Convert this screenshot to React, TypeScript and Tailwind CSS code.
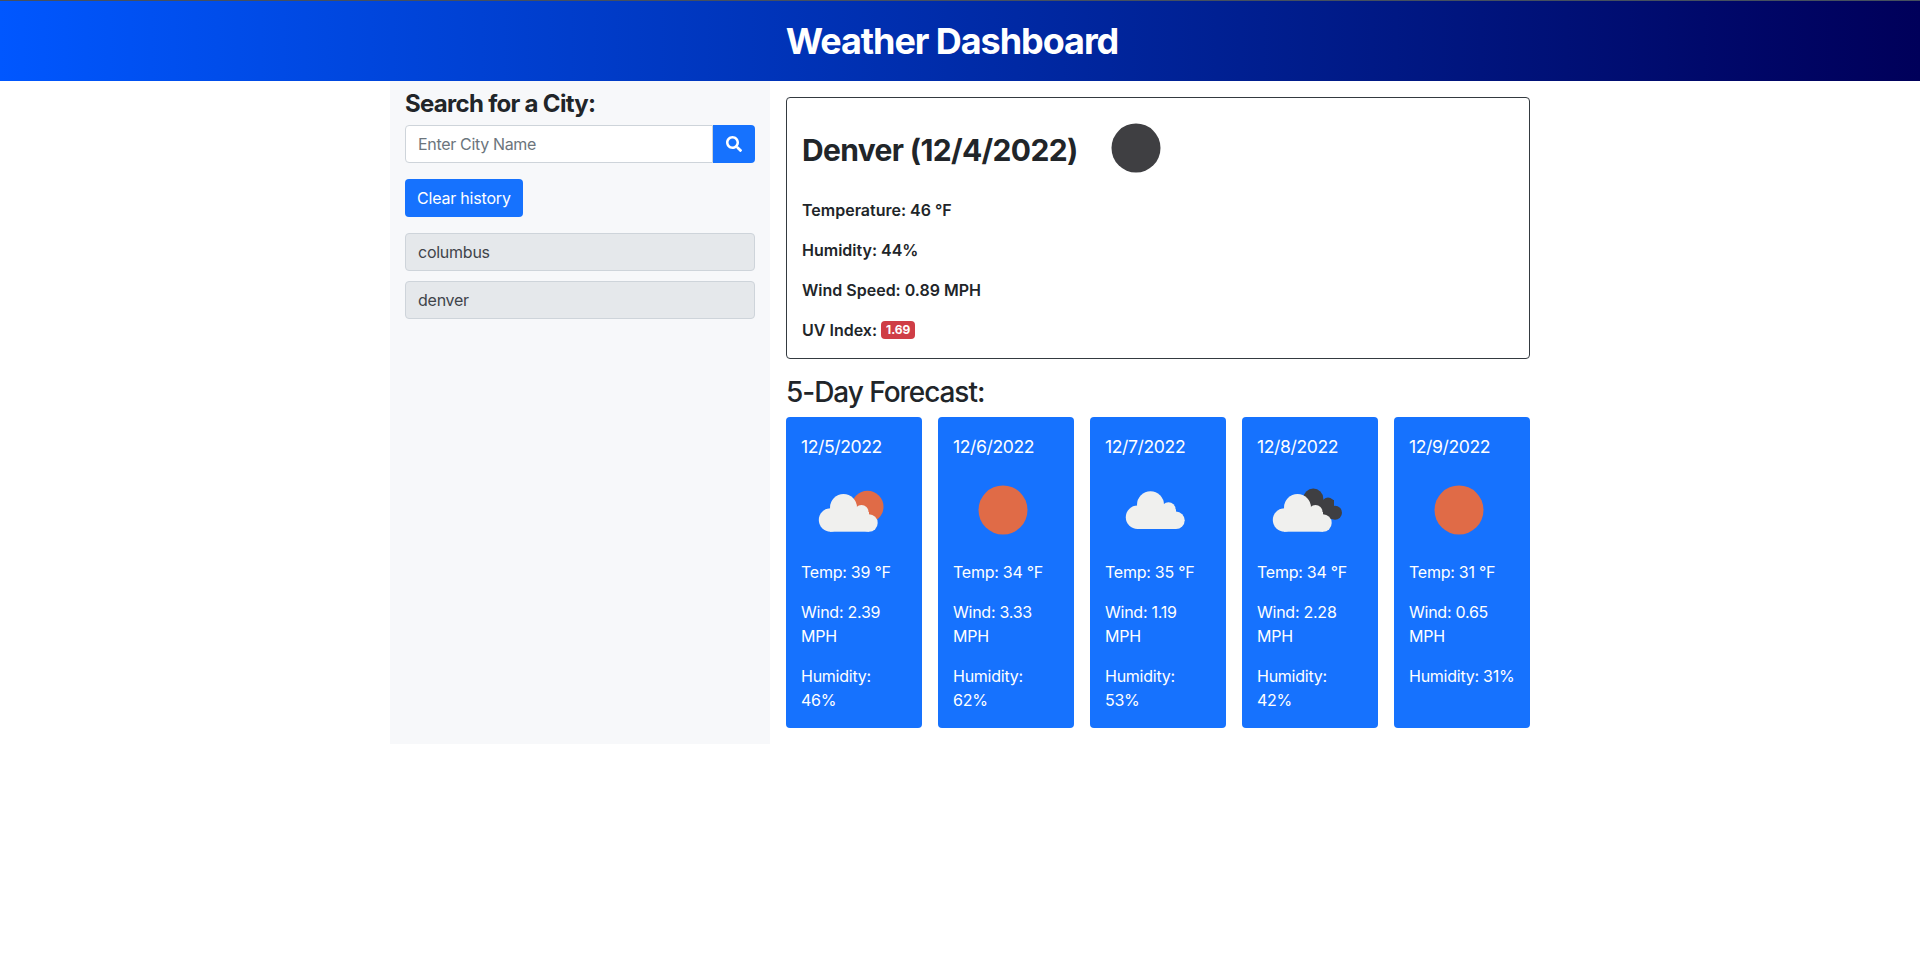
import { FaSearch } from 'react-icons/fa';

type IconKind = 'sun' | 'few' | 'cloud' | 'broken';

interface Day {
  date: string;
  icon: IconKind;
  temp: number;
  wind: string;
  humidity: number;
}

const HISTORY = ['columbus', 'denver'];

const FORECAST: Day[] = [
  { date: '12/5/2022', icon: 'few', temp: 39, wind: '2.39', humidity: 46 },
  { date: '12/6/2022', icon: 'sun', temp: 34, wind: '3.33', humidity: 62 },
  { date: '12/7/2022', icon: 'cloud', temp: 35, wind: '1.19', humidity: 53 },
  { date: '12/8/2022', icon: 'broken', temp: 34, wind: '2.28', humidity: 42 },
  { date: '12/9/2022', icon: 'sun', temp: 31, wind: '0.65', humidity: 31 },
];

// same puffy cloud in every icon, moved around per weather type
function Cloud({ x, y }: { x: number; y: number }) {
  return (
    <g transform={`translate(${x} ${y})`} fill="#f0f0ee">
      <circle cx="39.5" cy="47.5" r="13.5" />
      <circle cx="26.5" cy="60" r="11.7" />
      <circle cx="57.5" cy="52" r="7" />
      <circle cx="65" cy="63" r="8.7" />
      <rect x="26" y="52" width="39" height="19.7" />
    </g>
  );
}

function WeatherIcon({ kind, className }: { kind: IconKind | 'moon'; className?: string }) {
  return (
    <svg viewBox="0 0 100 100" className={className}>
      {kind === 'sun' && <circle cx="50" cy="50" r="24.5" fill="#e06b47" />}
      {kind === 'moon' && <circle cx="50" cy="50" r="24.5" fill="#3f3f42" />}
      {kind === 'few' && (
        <>
          <circle cx="66.5" cy="46.7" r="16" fill="#e06b47" />
          <Cloud x={3} y={0} />
        </>
      )}
      {kind === 'cloud' && <Cloud x={6} y={-2.7} />}
      {kind === 'broken' && (
        <>
          <g fill="#3f3f42">
            <circle cx="56.3" cy="38.5" r="10" />
            <circle cx="71" cy="43.5" r="6" />
            <circle cx="78" cy="52.7" r="7" />
            <rect x="53" y="40" width="24" height="19" />
          </g>
          <Cloud x={1} y={0} />
        </>
      )}
    </svg>
  );
}

function ForecastCard({ day }: { day: Day }) {
  return (
    <div className="w-[136px] rounded-[4px] bg-[#1672fe] px-[15px] pt-[17px] tracking-[-0.25px] text-white">
      <p className="text-[17.6px] leading-[26px] tracking-[-0.4px]">{day.date}</p>
      <WeatherIcon kind={day.icon} className="h-[100px] w-[100px]" />
      <p className="mb-4 leading-6">Temp: {day.temp} °F</p>
      <p className="mb-4 leading-6">Wind: {day.wind} MPH</p>
      <p className="mb-4 leading-6">Humidity: {day.humidity}%</p>
    </div>
  );
}

export default function App() {
  return (
    <div className="min-h-[970px] bg-white text-[#212529] font-['Inter',sans-serif]">
      <header className="flex h-[81px] items-center justify-center border-t border-[#46505f] bg-gradient-to-r from-[#0057ff] to-[#00005a] pr-4">
        <h1 className="text-[36px] font-bold tracking-[-1.06px] text-white">Weather Dashboard</h1>
      </header>

      <div className="mx-auto flex w-[1140px]">
        <aside className="w-[380px] bg-[#f7f8fa] px-[15px] pt-2">
          <h2 className="mb-[7px] text-[24px] leading-[29px] font-bold tracking-[-0.7px]">Search for a City:</h2>
          <div className="flex h-[38px]">
            <input
              placeholder="Enter City Name"
              className="h-full min-w-0 flex-1 rounded-l-[4px] border border-[#ced4da] bg-white px-3 tracking-[-0.33px] outline-none placeholder:text-[#6c757d]"
            />
            <button className="flex w-[42px] items-center justify-center rounded-r-[4px] bg-[#1672fe] text-white">
              <FaSearch size={16} />
            </button>
          </div>
          <button className="mt-4 h-[38px] rounded-[4px] bg-[#1672fe] px-3 tracking-[-0.2px] text-white">
            Clear history
          </button>
          <div className="mt-4 flex flex-col gap-[10px]">
            {HISTORY.map((city) => (
              <div
                key={city}
                className="flex h-[38px] items-center rounded-[4px] border border-[#ced4da] bg-[#e5e8eb] px-3 tracking-[-0.25px] text-[#3f444a]"
              >
                {city}
              </div>
            ))}
          </div>
        </aside>

        <main className="flex-1 pt-4 pb-4 pl-4">
          <section className="h-[262px] rounded-[4px] border border-[#343a40] px-[15px]">
            <div className="flex h-[100px] items-center">
              <h2 className="mt-1 text-[30px] font-bold tracking-[-0.65px]">Denver (12/4/2022)</h2>
              <WeatherIcon kind="moon" className="ml-2 h-[100px] w-[100px]" />
            </div>
            <p className="mb-4 leading-6 font-semibold">Temperature: 46 °F</p>
            <p className="mb-4 leading-6 font-semibold">Humidity: 44%</p>
            <p className="mb-4 leading-6 font-semibold">Wind Speed: 0.89 MPH</p>
            <p className="flex items-center leading-6 font-semibold">
              UV Index:
              <span className="ml-1 rounded-[4px] bg-[#cf3d46] px-[5px] text-[12px] leading-[18px] font-bold text-white">
                1.69
              </span>
            </p>
          </section>

          <h3 className="mt-4 mb-2 text-[28px] leading-[34px] font-medium tracking-[-1.05px]">5-Day Forecast:</h3>
          <div className="flex gap-4">
            {FORECAST.map((day) => (
              <ForecastCard key={day.date} day={day} />
            ))}
          </div>
        </main>
      </div>
    </div>
  );
}
